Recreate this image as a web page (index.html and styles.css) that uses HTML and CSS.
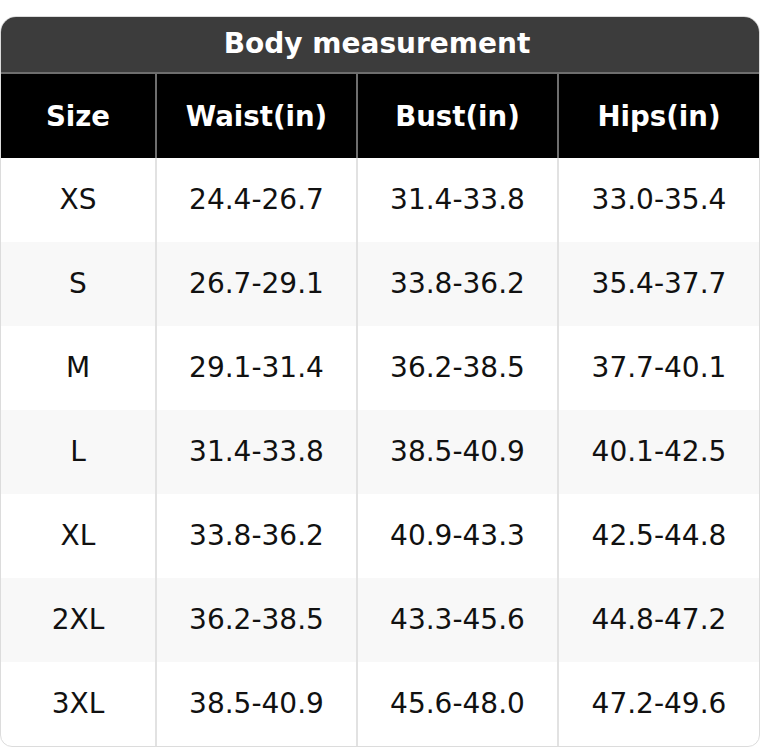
FILE: index.html
```html
<!DOCTYPE html>
<html>
<head>
<meta charset="utf-8">
<link rel="stylesheet" href="styles.css">
</head>
<body>
<div class="chart">
  <div class="title">Body measurement</div>
  <table class="grid">
    <colgroup>
      <col class="c-size"><col class="c-m"><col class="c-m"><col class="c-last">
    </colgroup>
    <thead>
      <tr><th>Size</th><th>Waist(in)</th><th>Bust(in)</th><th>Hips(in)</th></tr>
    </thead>
    <tbody>
      <tr><td>XS</td><td>24.4-26.7</td><td>31.4-33.8</td><td>33.0-35.4</td></tr>
      <tr><td>S</td><td>26.7-29.1</td><td>33.8-36.2</td><td>35.4-37.7</td></tr>
      <tr><td>M</td><td>29.1-31.4</td><td>36.2-38.5</td><td>37.7-40.1</td></tr>
      <tr><td>L</td><td>31.4-33.8</td><td>38.5-40.9</td><td>40.1-42.5</td></tr>
      <tr><td>XL</td><td>33.8-36.2</td><td>40.9-43.3</td><td>42.5-44.8</td></tr>
      <tr><td>2XL</td><td>36.2-38.5</td><td>43.3-45.6</td><td>44.8-47.2</td></tr>
      <tr><td>3XL</td><td>38.5-40.9</td><td>45.6-48.0</td><td>47.2-49.6</td></tr>
    </tbody>
  </table>
</div>
</body>
</html>
```
FILE: styles.css
```css
html, body {
  margin: 0;
  padding: 0;
  background: #ffffff;
}
body {
  padding-top: 16px;
  font-family: "DejaVu Sans", Verdana, sans-serif;
}
.chart {
  width: 760px;
  box-sizing: border-box;
  border: 1px solid #dcdcdc;
  border-radius: 16px 16px 12px 12px;
  overflow: hidden;
}
.title {
  height: 55px;
  background: #3c3c3c;
  color: #ffffff;
  font-weight: bold;
  font-size: 28px;
  line-height: 54px;
  text-align: center;
  padding-right: 6px;
}
.grid {
  width: 100%;
  border-collapse: collapse;
  table-layout: fixed;
}
.c-size { width: 155px; }
.c-m { width: 201px; }
.grid th {
  background: #000000;
  color: #ffffff;
  font-weight: bold;
  font-size: 27.6px;
  height: 83px;
  padding: 1px 0 0 0;
  border-top: 2px solid #6e6e6e;
  border-left: 2px solid #6e6e6e;
  text-align: center;
}
.grid th:first-child { border-left: none; }
.grid td {
  height: 82px;
  padding: 0 0 2px 0;
  font-size: 28px;
  color: #111111;
  text-align: center;
  border-left: 2px solid #e2e2e2;
}
.grid td:first-child { border-left: none; }
.grid tbody tr:nth-child(even) td { background: #f8f8f8; }
```
